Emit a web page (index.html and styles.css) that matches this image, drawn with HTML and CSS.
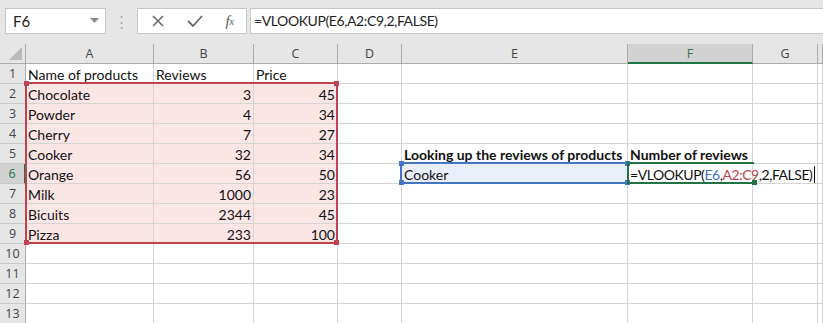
FILE: index.html
```html
<!DOCTYPE html>
<html lang="en">
<head>
  <meta charset="UTF-8">
  <title>VLOOKUP</title>
  <link rel="stylesheet" href="styles.css">
</head>
<body>
  <div class="toolbar">
    <div class="namebox">
      <span>F6</span>
      <svg class="arrow" width="9" height="6" viewBox="0 0 9 6"><path d="M0 0 L9 0 L4.5 5 Z" fill="#8a8a8a"/></svg>
    </div>
    <div class="dots">⋮</div>
    <div class="buttons">
      <svg width="12" height="12" viewBox="0 0 12 12"><path d="M1 1 L11 11 M11 1 L1 11" stroke="#6a6a6a" stroke-width="1.6"/></svg>
      <svg width="16" height="12" viewBox="0 0 16 12"><path d="M1 6 L6 11 L15 1" stroke="#6a6a6a" stroke-width="1.8" fill="none"/></svg>
      <span class="fx">f<sub>x</sub></span>
    </div>
    <div class="formula">=VLOOKUP(E6,A2:C9,2,FALSE)</div>
  </div>

  <div class="sheet">
    <div class="grid">
      <div class="hd corner"><span class="tri"></span></div>
      <div class="hd">A</div><div class="hd">B</div><div class="hd">C</div><div class="hd">D</div>
      <div class="hd">E</div><div class="hd active-col">F</div><div class="hd">G</div><div class="hd"></div>

      <div class="rh">1</div><div class="c">Name of products</div><div class="c">Reviews</div><div class="c">Price</div><div class="c"></div><div class="c"></div><div class="c"></div><div class="c"></div><div class="c"></div>
      <div class="rh">2</div><div class="c r">Chocolate</div><div class="c r n">3</div><div class="c r n">45</div><div class="c"></div><div class="c"></div><div class="c"></div><div class="c"></div><div class="c"></div>
      <div class="rh">3</div><div class="c r">Powder</div><div class="c r n">4</div><div class="c r n">34</div><div class="c"></div><div class="c"></div><div class="c"></div><div class="c"></div><div class="c"></div>
      <div class="rh">4</div><div class="c r">Cherry</div><div class="c r n">7</div><div class="c r n">27</div><div class="c"></div><div class="c"></div><div class="c"></div><div class="c"></div><div class="c"></div>
      <div class="rh">5</div><div class="c r">Cooker</div><div class="c r n">32</div><div class="c r n">34</div><div class="c"></div><div class="c b">Looking up the reviews of products</div><div class="c b">Number of reviews</div><div class="c"></div><div class="c"></div>
      <div class="rh active-row">6</div><div class="c r">Orange</div><div class="c r n">56</div><div class="c r n">50</div><div class="c"></div><div class="c blue">Cooker</div><div class="c edit">=VLOOKUP(<span class="ref-b">E6</span>,<span class="ref-r">A2:C9</span>,2,FALSE)<span class="caret"></span></div><div class="c nogrid"></div><div class="c"></div>
      <div class="rh">7</div><div class="c r">Milk</div><div class="c r n">1000</div><div class="c r n">23</div><div class="c"></div><div class="c"></div><div class="c"></div><div class="c"></div><div class="c"></div>
      <div class="rh">8</div><div class="c r">Bicuits</div><div class="c r n">2344</div><div class="c r n">45</div><div class="c"></div><div class="c"></div><div class="c"></div><div class="c"></div><div class="c"></div>
      <div class="rh">9</div><div class="c r">Pizza</div><div class="c r n">233</div><div class="c r n">100</div><div class="c"></div><div class="c"></div><div class="c"></div><div class="c"></div><div class="c"></div>
      <div class="rh">10</div><div class="c"></div><div class="c"></div><div class="c"></div><div class="c"></div><div class="c"></div><div class="c"></div><div class="c"></div><div class="c"></div>
      <div class="rh">11</div><div class="c"></div><div class="c"></div><div class="c"></div><div class="c"></div><div class="c"></div><div class="c"></div><div class="c"></div><div class="c"></div>
      <div class="rh">12</div><div class="c"></div><div class="c"></div><div class="c"></div><div class="c"></div><div class="c"></div><div class="c"></div><div class="c"></div><div class="c"></div>
      <div class="rh">13</div><div class="c"></div><div class="c"></div><div class="c"></div><div class="c"></div><div class="c"></div><div class="c"></div><div class="c"></div><div class="c"></div>
    </div>

    <!-- reference highlights drawn over the grid -->
    <div class="range red-range">
      <i class="h tl"></i><i class="h tr"></i><i class="h bl"></i><i class="h br"></i>
    </div>
    <div class="range blue-range">
      <i class="h tl"></i><i class="h tr"></i><i class="h bl"></i><i class="h br"></i>
    </div>
    <div class="range green-range">
      <i class="h br"></i>
    </div>
  </div>
</body>
</html>
```

FILE: styles.css
```css
body {
  margin: 0;
  background: #e6e6e6;
  font-family: Lato, "Liberation Sans", sans-serif;
  width: 823px;
  height: 323px;
  overflow: hidden;
}
.toolbar {
  display: flex;
  align-items: stretch;
  height: 26px;
  padding: 8px 0 10px 5px;
}
.namebox {
  width: 101px;
  box-sizing: border-box;
  background: white;
  border: 1px solid #c6c6c6;
  display: flex;
  align-items: center;
  justify-content: space-between;
  padding: 0 6px 0 7px;
  font-size: 15px;
  color: #222;
}
.dots {
  width: 31px;
  text-align: center;
  color: #a8a8a8;
  font-size: 15px;
  line-height: 26px;
}
.buttons {
  width: 110px;
  box-sizing: border-box;
  background: white;
  border: 1px solid #c6c6c6;
  display: flex;
  align-items: center;
  justify-content: space-between;
  padding: 0 12px 0 14px;
}
.fx {
  font-family: "Liberation Serif", serif;
  font-style: italic;
  font-size: 15px;
  color: #555;
}
.fx sub {
  font-size: 10px;
  vertical-align: 1px;
}
.formula {
  flex: 1;
  margin-left: 3px;
  background: white;
  border: 1px solid #c6c6c6;
  border-right: none;
  padding-left: 3px;
  font-size: 14px;
  letter-spacing: -0.4px;
  line-height: 24px;
  color: #222;
}
.sheet {
  position: relative;
  background: white;
  overflow: hidden;
  height: 279px;
}
.grid {
  display: grid;
  grid-template-columns: 26px 128px 100px 84px 64px 226px 125px 65px 1fr;
  grid-auto-rows: 20px;
}
.grid > div {
  box-sizing: border-box;
  border-right: 1px solid #d4d4d4;
  border-bottom: 1px solid #d4d4d4;
  white-space: nowrap;
}
.hd {
  background: #e6e6e6;
  border-color: #ababab !important;
  font-family: "Open Sans", sans-serif;
  font-size: 12.5px;
  color: #444;
  text-align: center;
  line-height: 19px;
}
.hd.corner {
  position: relative;
}
.tri {
  position: absolute;
  right: 3px;
  bottom: 3px;
  width: 0;
  height: 0;
  border-left: 13px solid transparent;
  border-bottom: 13px solid #b9b9b9;
}
.hd.active-col {
  background: #d2d2d2;
  border-bottom: 2px solid #217346 !important;
  color: #3b6e4f;
}
.rh {
  background: #e6e6e6;
  border-right-color: #ababab !important;
  border-bottom-color: #c8c8c8 !important;
  font-family: "Open Sans", sans-serif;
  font-size: 12.5px;
  color: #444;
  text-align: center;
  line-height: 20px;
}
.rh.active-row {
  background: #d2d2d2;
  border-right: 2px solid #217346 !important;
  color: #217346;
}
.c {
  font-size: 14px;
  line-height: 21px;
  padding: 0 2px;
  color: #111;
  overflow: visible;
}
.c.r {
  background: #fbe6e6;
}
.c.n {
  text-align: right;
}
.c.b {
  font-weight: bold;
}
.c.blue {
  background: #e9eef8;
}
.c.edit {
  position: relative;
  z-index: 1;
  letter-spacing: -0.45px;
}
.ref-b {
  color: #3f6fc0;
}
.ref-r {
  color: #bd3f4b;
}
.caret {
  display: inline-block;
  width: 1px;
  height: 17px;
  background: #111;
  vertical-align: -3px;
  margin-left: 2px;
}
.range {
  position: absolute;
  box-sizing: border-box;
  border-style: solid;
  border-width: 2px;
  z-index: 2;
}
.red-range {
  left: 25px;
  top: 38px;
  width: 313px;
  height: 162px;
  border-color: #be4350;
}
.blue-range {
  left: 400px;
  top: 118px;
  width: 229px;
  height: 22px;
  border-color: #4574c2;
}
.green-range {
  left: 627px;
  top: 118px;
  width: 127px;
  height: 22px;
  border-color: #217346;
  border-right: none;
}
.h {
  position: absolute;
  width: 5px;
  height: 5px;
}
.red-range .h { background: #be4350; }
.blue-range .h { background: #4574c2; }
.green-range .h { background: #217346; }
.tl { left: -3px; top: -3px; }
.tr { right: -3px; top: -3px; }
.bl { left: -3px; bottom: -3px; }
.br { right: -3px; bottom: -3px; }
```
